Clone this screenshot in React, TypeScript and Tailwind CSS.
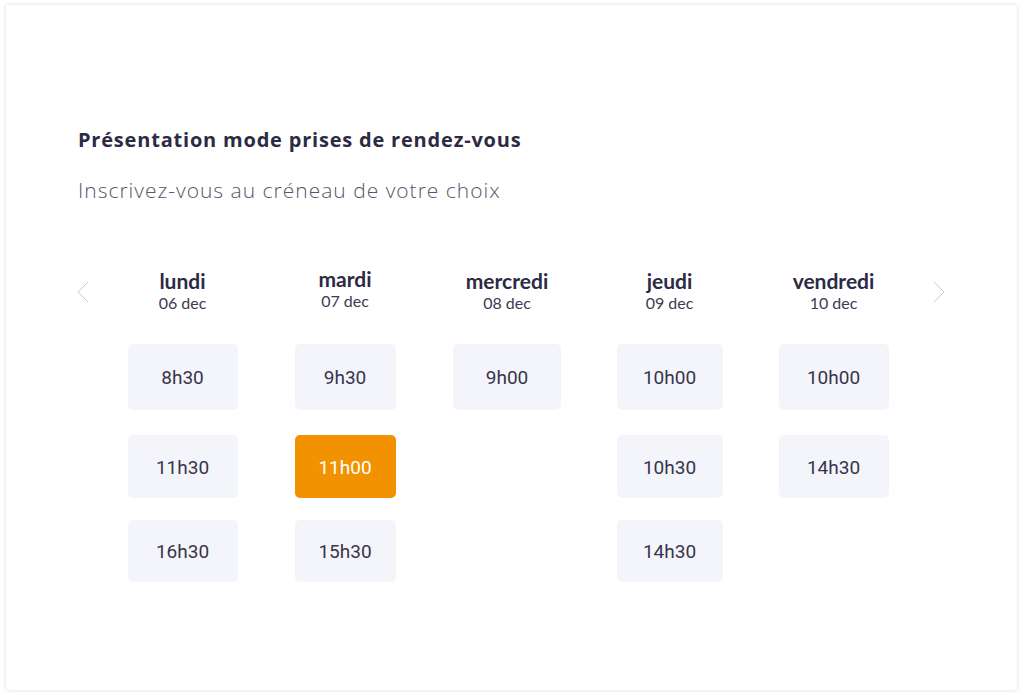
import React from "react";

type Day = { name: string; date: string; slots: string[]; w: string; lift?: boolean };

const days: Day[] = [
  { name: "lundi", date: "06 dec", slots: ["8h30", "11h30", "16h30"], w: "w-[110px]" },
  { name: "mardi", date: "07 dec", slots: ["9h30", "11h00", "15h30"], w: "w-[101px]", lift: true },
  { name: "mercredi", date: "08 dec", slots: ["9h00"], w: "w-[108px]" },
  { name: "jeudi", date: "09 dec", slots: ["10h00", "10h30", "14h30"], w: "w-[106px]" },
  { name: "vendredi", date: "10 dec", slots: ["10h00", "14h30"], w: "w-[110px]" },
];

const rowCls = ["mt-[31px] h-[66px]", "mt-[25px] h-[63px]", "mt-[22px] h-[62px]"];

function Chevron({ dir }: { dir: "left" | "right" }) {
  return (
    <svg width="14" height="22" viewBox="0 0 14 22" fill="none">
      {dir === "left" ? (
        <polyline points="12,1 2,11 12,21" stroke="#c9c9cf" strokeWidth="1" />
      ) : (
        <polyline points="2,1 12,11 2,21" stroke="#c9c9cf" strokeWidth="1" />
      )}
    </svg>
  );
}

export default function App() {
  return (
    <div className="w-[1024px] h-[695px] bg-white pt-[5px] pl-[6px] pr-[7px] pb-[5px]">
      <div className="h-full bg-white shadow-[0_0_4px_rgba(0,0,0,0.16)] pt-[123px] pl-[72px]">
        <h1 className="font-['Open_Sans',sans-serif] font-bold text-[20px] tracking-[0.8px] leading-[24px] text-[#2d2a44]">
          Présentation mode prises de rendez-vous
        </h1>
        <p className="mt-[24px] font-['Open_Sans',sans-serif] font-light text-[21px] tracking-[1px] leading-[28px] text-[#57566a]">
          Inscrivez-vous au créneau de votre choix
        </p>
        <div className="mt-[66px] -ml-[3px] grid grid-cols-[26px_163px_162px_162px_163px_165px_auto]">
          <div className="pt-[11px] pl-[1px]">
            <Chevron dir="left" />
          </div>
          {days.map((d) => (
            <div key={d.name} className="flex flex-col items-center">
              <div className={`flex flex-col items-center ${d.lift ? "-mt-[2px] mb-[2px]" : ""}`}>
                <div className="font-['Lato',sans-serif] font-bold text-[21px] leading-[22px] text-[#2d2a44]">
                  {d.name}
                </div>
                <div className="mt-[1px] font-['Lato',sans-serif] text-[16px] leading-[20px] text-[#3d3a52]">
                  {d.date}
                </div>
              </div>
              {d.slots.map((s, i) => {
                const active = d.name === "mardi" && s === "11h00";
                return (
                  <div
                    key={s + i}
                    className={`${rowCls[i]} ${d.w} pt-[3px] rounded-[5px] flex items-center justify-center font-['Roboto',sans-serif] text-[19px] ${
                      active ? "bg-[#f29200] text-white" : "bg-[#f4f5fa] text-[#37344d]"
                    }`}
                  >
                    {s}
                  </div>
                );
              })}
            </div>
          ))}
          <div className="pt-[11px] pl-[16px]">
            <Chevron dir="right" />
          </div>
        </div>
      </div>
    </div>
  );
}
